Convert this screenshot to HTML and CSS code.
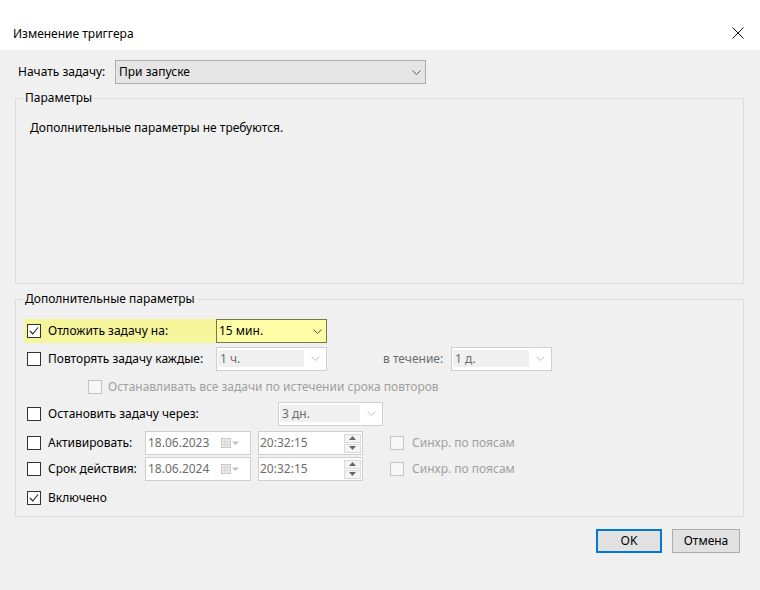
FILE: index.html
```html
<!DOCTYPE html>
<html lang="ru">
<head>
<meta charset="utf-8">
<title>Изменение триггера</title>
<link rel="stylesheet" href="styles.css">
</head>
<body>
<header class="titlebar">
  <span class="title">Изменение триггера</span>
  <span class="close" aria-label="Закрыть"><svg width="12" height="12" viewBox="0 0 12 12"><path d="M0.5 0.5 L11.5 11.5 M11.5 0.5 L0.5 11.5" stroke="#111" stroke-width="1" fill="none"/></svg></span>
</header>
<main class="content">
  <div class="start-row">
    <span class="start-label">Начать задачу:</span>
    <div class="combo combo-main"><span>При запуске</span><svg class="chev" width="9" height="5" viewBox="0 0 9 5"><polyline points="0.5,0.5 4.5,4.5 8.5,0.5" fill="none" stroke="#555" stroke-width="1"/></svg></div>
  </div>

  <fieldset class="group group-params">
    <legend>Параметры</legend>
    <p class="note">Дополнительные параметры не требуются.</p>
  </fieldset>

  <fieldset class="group group-adv">
    <legend>Дополнительные параметры</legend>
    <div class="rows">
      <div class="row row-hl">
        <span class="cb"><svg width="12" height="12" viewBox="0 0 12 12"><polyline points="2,6 4.8,9 10,2.5" fill="none" stroke="#222" stroke-width="1.1"/></svg></span>
        <span class="lbl lbl-a">Отложить задачу на:</span>
        <div class="combo combo-hl"><span>15 мин.</span><svg class="chev" width="9" height="5" viewBox="0 0 9 5"><polyline points="0.5,0.5 4.5,4.5 8.5,0.5" fill="none" stroke="#555" stroke-width="1"/></svg></div>
      </div>

      <div class="row">
        <span class="cb"></span>
        <span class="lbl lbl-a">Повторять задачу каждые:</span>
        <div class="combo combo-dis"><span class="field">1 ч.</span><span class="arrow"><svg width="9" height="5" viewBox="0 0 9 5"><polyline points="0.5,0.5 4.5,4.5 8.5,0.5" fill="none" stroke="#c4c4c4" stroke-width="1"/></svg></span></div>
        <span class="lbl lbl-during">в течение:</span>
        <div class="combo combo-dis combo-narrow"><span class="field">1 д.</span><span class="arrow"><svg width="9" height="5" viewBox="0 0 9 5"><polyline points="0.5,0.5 4.5,4.5 8.5,0.5" fill="none" stroke="#c4c4c4" stroke-width="1"/></svg></span></div>
      </div>

      <div class="row row-sub">
        <span class="cb cb-dis"></span>
        <span class="lbl lbl-dis">Останавливать все задачи по истечении срока повторов</span>
      </div>

      <div class="row">
        <span class="cb"></span>
        <span class="lbl lbl-b">Остановить задачу через:</span>
        <div class="combo combo-dis combo-stop"><span class="field">3 дн.</span><span class="arrow"><svg width="9" height="5" viewBox="0 0 9 5"><polyline points="0.5,0.5 4.5,4.5 8.5,0.5" fill="none" stroke="#c4c4c4" stroke-width="1"/></svg></span></div>
      </div>

      <div class="row">
        <span class="cb"></span>
        <span class="lbl lbl-c">Активировать:</span>
        <div class="datebox"><span class="val">18.06.2023</span>
          <span class="cal"><svg width="20" height="10" viewBox="0 0 20 10"><rect x="0.5" y="0.5" width="9" height="9" fill="#ececec" stroke="#c6c6c6"/><path d="M0.5 3.5 H9.5 M0.5 6.5 H9.5 M3.5 0.5 V9.5 M6.5 0.5 V9.5" stroke="#d8d8d8" stroke-width="1"/><polygon points="11,3.5 18,3.5 14.5,7" fill="#c0c0c0"/></svg></span>
        </div>
        <div class="timebox"><span class="val">20:32:15</span>
          <span class="spin"><span class="spin-btn"><svg width="7" height="4" viewBox="0 0 7 4"><polygon points="0,4 7,4 3.5,0" fill="#666"/></svg></span><span class="spin-btn"><svg width="7" height="4" viewBox="0 0 7 4"><polygon points="0,0 7,0 3.5,4" fill="#666"/></svg></span></span>
        </div>
        <span class="sync"><span class="cb cb-dis"></span><span class="lbl-dis">Синхр. по поясам</span></span>
      </div>

      <div class="row">
        <span class="cb"></span>
        <span class="lbl lbl-c">Срок действия:</span>
        <div class="datebox"><span class="val">18.06.2024</span>
          <span class="cal"><svg width="20" height="10" viewBox="0 0 20 10"><rect x="0.5" y="0.5" width="9" height="9" fill="#ececec" stroke="#c6c6c6"/><path d="M0.5 3.5 H9.5 M0.5 6.5 H9.5 M3.5 0.5 V9.5 M6.5 0.5 V9.5" stroke="#d8d8d8" stroke-width="1"/><polygon points="11,3.5 18,3.5 14.5,7" fill="#c0c0c0"/></svg></span>
        </div>
        <div class="timebox"><span class="val">20:32:15</span>
          <span class="spin"><span class="spin-btn"><svg width="7" height="4" viewBox="0 0 7 4"><polygon points="0,4 7,4 3.5,0" fill="#666"/></svg></span><span class="spin-btn"><svg width="7" height="4" viewBox="0 0 7 4"><polygon points="0,0 7,0 3.5,4" fill="#666"/></svg></span></span>
        </div>
        <span class="sync"><span class="cb cb-dis"></span><span class="lbl-dis">Синхр. по поясам</span></span>
      </div>

      <div class="row">
        <span class="cb"><svg width="12" height="12" viewBox="0 0 12 12"><polyline points="2,6 4.8,9 10,2.5" fill="none" stroke="#222" stroke-width="1.1"/></svg></span>
        <span class="lbl">Включено</span>
      </div>
    </div>
  </fieldset>

  <div class="buttons">
    <button class="btn btn-ok">OK</button>
    <button class="btn btn-cancel">Отмена</button>
  </div>
</main>
</body>
</html>
```

FILE: styles.css
```css
* { box-sizing: border-box; }
html, body { margin: 0; padding: 0; }
body {
  width: 760px;
  height: 590px;
  overflow: hidden;
  background: #f0f0f0;
  font-family: "Noto Sans", "Open Sans", sans-serif;
  font-size: 12px;
  line-height: 16px;
  color: #000;
}

.titlebar {
  height: 50px;
  background: #fff;
  display: flex;
  align-items: center;
  justify-content: space-between;
  padding: 18px 16px 0 13px;
}
.close { display: flex; margin-bottom: 2px; }

.content { padding: 10px 16px 0 15px; }

.start-row { display: flex; align-items: center; height: 24px; }
.start-label { width: 100px; padding-left: 3px; }

.combo {
  height: 24px;
  border: 1px solid #adadad;
  display: flex;
  align-items: center;
  flex: none;
}
.combo-main {
  width: 311px;
  background: #e5e5e5;
  padding: 0 4px 0 3px;
  justify-content: space-between;
}
.combo-hl {
  width: 111px;
  background: #fdfda6;
  border-color: #78784e;
  padding: 0 4px 0 2px;
  justify-content: space-between;
}
.combo-dis {
  width: 111px;
  background: #fff;
  border-color: #cfcfcf;
  padding: 2px 0 3px 1px;
  align-items: stretch;
}
.combo-dis .field {
  flex: 1;
  background: #f0f0f0;
  color: #6d6d6d;
  padding-left: 2px;
  display: flex;
  align-items: center;
}
.combo-dis .arrow {
  width: 22px;
  display: flex;
  align-items: center;
  justify-content: center;
}
.combo-narrow { width: 101px; }
.combo-stop { width: 105px; }
.chev { display: block; }

.group {
  margin: 0;
  padding: 0;
  min-width: 0;
  width: 729px;
  border: 1px solid #dcdcdc;
}
.group legend {
  margin-left: 7px;
  padding: 0 2px;
  line-height: 16px;
}
.group-params { margin-top: 6px; height: 194px; }
.note { margin: 0; padding: 14px 0 0 14px; }

.group-adv { margin-top: 7px; padding: 12px 0 6px 0; }
.rows {
  display: grid;
  grid-template-rows: 28px 28px 27px 29px 26px 29px 24px;
  align-items: start;
  margin-left: 8px;
}
.row {
  display: flex;
  align-items: center;
  height: 24px;
  padding-left: 3px;
}
.row-hl { width: 303px; background: #f5f59c; }
.row-sub { padding-left: 64px; }

.cb {
  width: 14px;
  height: 14px;
  flex: none;
  border: 1px solid #333;
  background: #fff;
  margin-right: 7px;
  display: flex;
  align-items: center;
  justify-content: center;
}
.cb-dis { border-color: #c4c4c4; background: #f7f7f7; }
.row-sub .cb { margin-right: 6px; }

.lbl { flex: none; white-space: nowrap; }
.lbl-a { width: 168px; }
.lbl-b { width: 230px; }
.lbl-c { width: 97px; }
.lbl-during { width: 68px; margin-left: 56px; color: #6d6d6d; }
.lbl-dis { color: #a0a0a0; white-space: nowrap; }

.datebox, .timebox {
  height: 24px;
  border: 1px solid #cfcfcf;
  background: #fff;
  display: flex;
  align-items: center;
  flex: none;
  color: #6d6d6d;
}
.datebox { width: 106px; padding: 0 9px 0 2px; }
.datebox .cal { margin-left: auto; display: flex; }
.timebox { width: 105px; margin-left: 7px; padding: 0 1px 0 1px; }
.timebox .spin {
  margin-left: auto;
  display: flex;
  flex-direction: column;
  gap: 1px;
}
.spin-btn {
  width: 17px;
  height: 9px;
  border: 1px solid #dadada;
  background: #f4f4f4;
  display: flex;
  align-items: center;
  justify-content: center;
}
.sync { display: flex; align-items: center; margin-left: 27px; }
.sync .cb { margin-right: 8px; }

.buttons {
  display: flex;
  justify-content: flex-end;
  gap: 10px;
  margin-top: 12px;
  padding-right: 4px;
}
.btn {
  height: 24px;
  margin: 0;
  padding: 0;
  background: #e1e1e1;
  border: 1px solid #adadad;
  font: inherit;
  color: #000;
}
.btn-ok { width: 66px; border: 2px solid #0078d7; }
.btn-cancel { width: 68px; }
```
